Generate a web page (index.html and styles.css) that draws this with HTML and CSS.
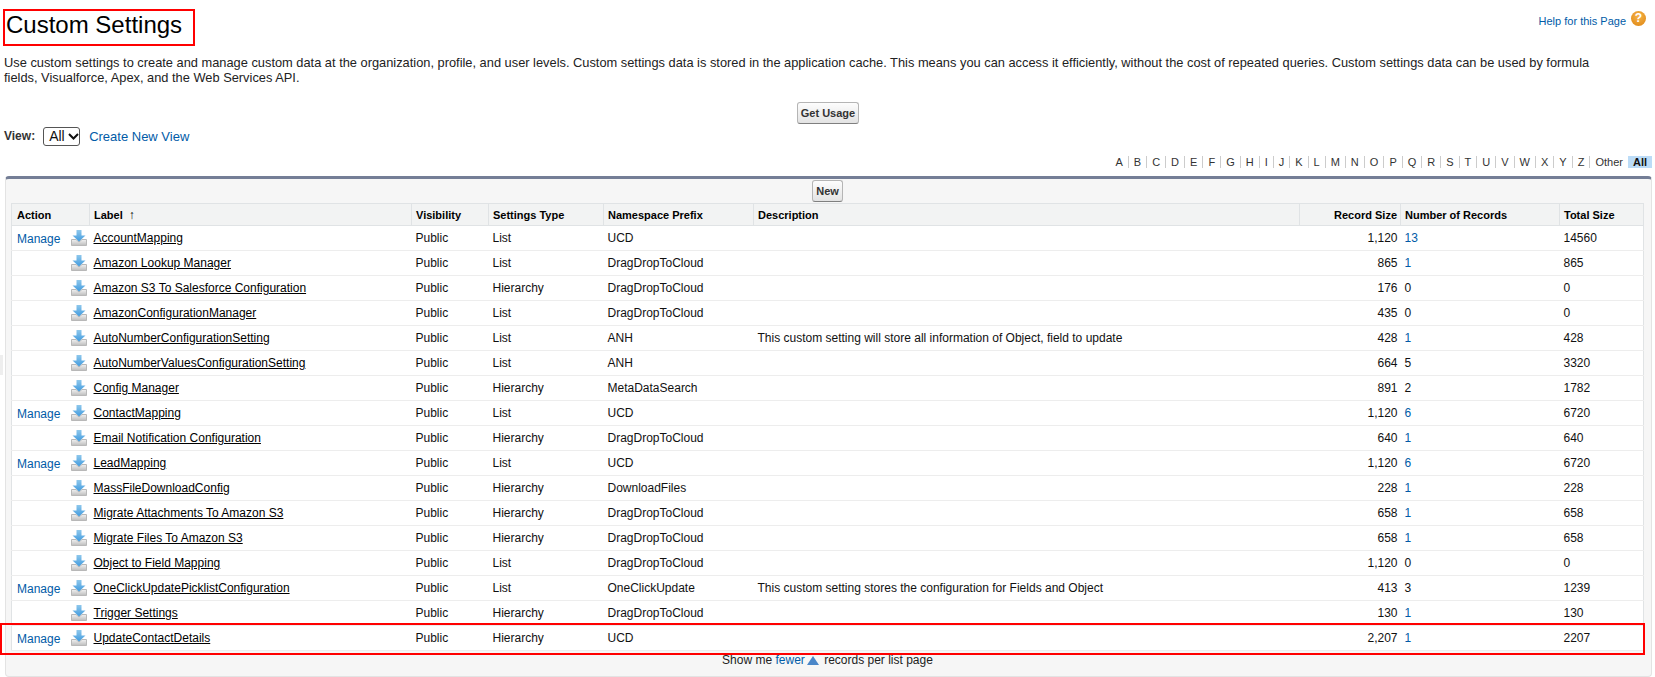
FILE: index.html
```html
<!DOCTYPE html>
<html lang="en">
<head>
<meta charset="utf-8">
<title>Custom Settings</title>
<link rel="stylesheet" href="styles.css">
</head>
<body>
<svg class="defs" width="0" height="0">
  <defs>
    <linearGradient id="tray" x1="0" y1="0" x2="0" y2="1"><stop offset="0" stop-color="#f2f2f2"/><stop offset="1" stop-color="#bcbcbc"/></linearGradient>
    <linearGradient id="arrow" x1="0" y1="0" x2="0" y2="1"><stop offset="0" stop-color="#8fc8ec"/><stop offset="1" stop-color="#3f9ade"/></linearGradient>
    <symbol id="dl" viewBox="0 0 16 16">
      <path d="M0.500 9.500h4.500l3 2.500 3-2.500h4.500v6h-15z" fill="url(#tray)" stroke="#b8b8b8"/>
      <path d="M5.500 0h5v5.500h4l-6.500 6-6.500-6h4z" fill="url(#arrow)"/>
    </symbol>
  </defs>
</svg>
<header class="top">
  <h1 class="title">Custom Settings</h1>
  <a class="help"><span class="help-text">Help for this Page</span><span class="help-icon">?</span></a>
</header>
<p class="intro">Use custom settings to create and manage custom data at the organization, profile, and user levels. Custom settings data is stored in the application cache. This means you can access it efficiently, without the cost of repeated queries. Custom settings data can be used by formula fields, Visualforce, Apex, and the Web Services API.</p>
<div class="usage"><button class="btn">Get Usage</button></div>
<div class="view">
  <b>View:</b>
  <span class="select">All<svg width="11" height="7" viewBox="0 0 11 7"><path d="M1 1l4.500 4.500L10 1" fill="none" stroke="#111" stroke-width="2"/></svg></span>
  <a class="link">Create New View</a>
</div>
<nav class="alpha">
  <a>A</a><a>B</a><a>C</a><a>D</a><a>E</a><a>F</a><a>G</a><a>H</a><a>I</a><a>J</a><a>K</a><a>L</a><a>M</a><a>N</a><a>O</a><a>P</a><a>Q</a><a>R</a><a>S</a><a>T</a><a>U</a><a>V</a><a>W</a><a>X</a><a>Y</a><a>Z</a><a>Other</a><a class="on">All</a>
</nav>
<section class="panel">
  <div class="panel-btn"><button class="btn">New</button></div>
  <table>
    <colgroup>
      <col class="c-action"><col class="c-label"><col class="c-vis"><col class="c-type"><col class="c-ns"><col class="c-desc"><col class="c-size"><col class="c-num"><col class="c-total">
    </colgroup>
    <thead>
      <tr><th>Action</th><th>Label <span class="sort">↑</span></th><th>Visibility</th><th>Settings Type</th><th>Namespace Prefix</th><th>Description</th><th class="num">Record Size</th><th>Number of Records</th><th>Total Size</th></tr>
    </thead>
    <tbody>
      <tr><td><div class="act"><a class="link">Manage</a><svg class="ico"><use href="#dl"/></svg></div></td><td><a class="lbl">AccountMapping</a></td><td>Public</td><td>List</td><td>UCD</td><td></td><td class="num">1,120</td><td class="blue">13</td><td>14560</td></tr>
      <tr><td><div class="act"><svg class="ico"><use href="#dl"/></svg></div></td><td><a class="lbl">Amazon Lookup Manager</a></td><td>Public</td><td>List</td><td>DragDropToCloud</td><td></td><td class="num">865</td><td class="blue">1</td><td>865</td></tr>
      <tr><td><div class="act"><svg class="ico"><use href="#dl"/></svg></div></td><td><a class="lbl">Amazon S3 To Salesforce Configuration</a></td><td>Public</td><td>Hierarchy</td><td>DragDropToCloud</td><td></td><td class="num">176</td><td>0</td><td>0</td></tr>
      <tr><td><div class="act"><svg class="ico"><use href="#dl"/></svg></div></td><td><a class="lbl">AmazonConfigurationManager</a></td><td>Public</td><td>List</td><td>DragDropToCloud</td><td></td><td class="num">435</td><td>0</td><td>0</td></tr>
      <tr><td><div class="act"><svg class="ico"><use href="#dl"/></svg></div></td><td><a class="lbl">AutoNumberConfigurationSetting</a></td><td>Public</td><td>List</td><td>ANH</td><td>This custom setting will store all information of Object, field to update</td><td class="num">428</td><td class="blue">1</td><td>428</td></tr>
      <tr><td><div class="act"><svg class="ico"><use href="#dl"/></svg></div></td><td><a class="lbl">AutoNumberValuesConfigurationSetting</a></td><td>Public</td><td>List</td><td>ANH</td><td></td><td class="num">664</td><td>5</td><td>3320</td></tr>
      <tr><td><div class="act"><svg class="ico"><use href="#dl"/></svg></div></td><td><a class="lbl">Config Manager</a></td><td>Public</td><td>Hierarchy</td><td>MetaDataSearch</td><td></td><td class="num">891</td><td>2</td><td>1782</td></tr>
      <tr><td><div class="act"><a class="link">Manage</a><svg class="ico"><use href="#dl"/></svg></div></td><td><a class="lbl">ContactMapping</a></td><td>Public</td><td>List</td><td>UCD</td><td></td><td class="num">1,120</td><td class="blue">6</td><td>6720</td></tr>
      <tr><td><div class="act"><svg class="ico"><use href="#dl"/></svg></div></td><td><a class="lbl">Email Notification Configuration</a></td><td>Public</td><td>Hierarchy</td><td>DragDropToCloud</td><td></td><td class="num">640</td><td class="blue">1</td><td>640</td></tr>
      <tr><td><div class="act"><a class="link">Manage</a><svg class="ico"><use href="#dl"/></svg></div></td><td><a class="lbl">LeadMapping</a></td><td>Public</td><td>List</td><td>UCD</td><td></td><td class="num">1,120</td><td class="blue">6</td><td>6720</td></tr>
      <tr><td><div class="act"><svg class="ico"><use href="#dl"/></svg></div></td><td><a class="lbl">MassFileDownloadConfig</a></td><td>Public</td><td>Hierarchy</td><td>DownloadFiles</td><td></td><td class="num">228</td><td class="blue">1</td><td>228</td></tr>
      <tr><td><div class="act"><svg class="ico"><use href="#dl"/></svg></div></td><td><a class="lbl">Migrate Attachments To Amazon S3</a></td><td>Public</td><td>Hierarchy</td><td>DragDropToCloud</td><td></td><td class="num">658</td><td class="blue">1</td><td>658</td></tr>
      <tr><td><div class="act"><svg class="ico"><use href="#dl"/></svg></div></td><td><a class="lbl">Migrate Files To Amazon S3</a></td><td>Public</td><td>Hierarchy</td><td>DragDropToCloud</td><td></td><td class="num">658</td><td class="blue">1</td><td>658</td></tr>
      <tr><td><div class="act"><svg class="ico"><use href="#dl"/></svg></div></td><td><a class="lbl">Object to Field Mapping</a></td><td>Public</td><td>List</td><td>DragDropToCloud</td><td></td><td class="num">1,120</td><td>0</td><td>0</td></tr>
      <tr><td><div class="act"><a class="link">Manage</a><svg class="ico"><use href="#dl"/></svg></div></td><td><a class="lbl">OneClickUpdatePicklistConfiguration</a></td><td>Public</td><td>List</td><td>OneClickUpdate</td><td>This custom setting stores the configuration for Fields and Object</td><td class="num">413</td><td>3</td><td>1239</td></tr>
      <tr><td><div class="act"><svg class="ico"><use href="#dl"/></svg></div></td><td><a class="lbl">Trigger Settings</a></td><td>Public</td><td>Hierarchy</td><td>DragDropToCloud</td><td></td><td class="num">130</td><td class="blue">1</td><td>130</td></tr>
      <tr><td><div class="act"><a class="link">Manage</a><svg class="ico"><use href="#dl"/></svg></div></td><td><a class="lbl">UpdateContactDetails</a></td><td>Public</td><td>Hierarchy</td><td>UCD</td><td></td><td class="num">2,207</td><td class="blue">1</td><td>2207</td></tr>
    </tbody>
  </table>
  <div class="more">Show me <a class="link">fewer</a><span class="tri"></span> records per list page</div>
</section>
<div class="handle"></div>
<div class="mark mark-title"></div>
<div class="mark mark-row"></div>
</body>
</html>
```
FILE: styles.css
```css
* { box-sizing: border-box; }
html, body { margin: 0; height: 677px; overflow: hidden; }
body { position: relative; padding: 0 3px 0 4px; background: #fff; color: #111; font-family: "Liberation Sans", Arial, sans-serif; font-size: 12px; }
.defs { position: absolute; }
.top { display: flex; justify-content: space-between; height: 50px; }
.title { margin: 11px 0 0 2px; font-size: 24px; line-height: 28px; font-weight: 400; color: #000; }
.help { margin: 11px 0 0; padding-right: 6px; color: #015ba7; font-size: 11px; display: flex; align-items: flex-start; gap: 5px; line-height: 15px; }
.help-text { margin-top: 3px; }
.help-icon { width: 15px; height: 15px; border-radius: 50%; background: radial-gradient(circle at 50% 35%, #f6b44a, #dd8410); color: #fff; font-weight: 700; font-size: 12px; line-height: 15px; text-align: center; }
.intro { margin: 5px 0 0; max-width: 1620px; font-size: 12.83px; line-height: 15px; color: #222; }
.usage { margin-top: 17px; display: flex; justify-content: center; }
.btn { height: 22px; padding: 0 3px; font: 700 11px "Liberation Sans", Arial, sans-serif; color: #333; background: linear-gradient(#fdfdfd, #e3e3e3); border: 1px solid #b5b5b5; border-bottom-color: #7f7f7f; border-radius: 3px; }
.view { display: flex; align-items: center; height: 24px; color: #333; }
.view b { font-size: 12px; margin-right: 8px; }
.select { display: inline-flex; align-items: center; gap: 3px; width: 37px; height: 19px; padding-left: 5px; font-size: 14px; color: #111; border: 1px solid #555; border-radius: 3px; margin-right: 9px; }
.link { color: #015ba7; }
.view .link { font-size: 13px; }
.alpha { display: flex; justify-content: flex-end; margin: 8px 0; height: 12px; font-size: 11px; line-height: 12px; color: #333; }
.alpha a { padding: 0 5px; border-right: 1px solid #ccc; }
.alpha a:nth-last-child(2) { border-right: 0; }
.alpha a.on { background: #bcdcf7; font-weight: 700; color: #111; border: 0; padding: 0 5px; }
.panel { margin-left: 1px; height: 501px; background: #f6f6f6; border: 1px solid #e3e3e3; border-top: 3px solid #747e96; border-radius: 4px; padding: 0 7px 0 5px; }
.panel-btn { display: flex; justify-content: center; padding-top: 1px; height: 24px; }
table { width: 100%; table-layout: fixed; border-collapse: collapse; background: #fff; border: 1px solid #e0e3e5; font-size: 12px; color: #111; }
.c-action { width: 78px; } .c-label { width: 322px; } .c-vis { width: 77px; } .c-type { width: 115px; } .c-ns { width: 150px; } .c-desc { width: 546px; } .c-size { width: 101px; } .c-num { width: 159px; } .c-total { width: auto; }
th { height: 22px; padding: 0 4px; text-align: left; font-size: 11px; font-weight: 700; background: #f2f3f3; border-bottom: 1px solid #e0e3e5; border-left: 1px solid #e0e3e5; color: #000; }
th:first-child { border-left: 0; padding-left: 5px; }
td { height: 25px; padding: 0 4px; border-bottom: 1px solid #ededed; white-space: nowrap; overflow: hidden; }
td:first-child { padding-left: 5px; }
th.num, td.num { text-align: right; padding-right: 3px; }
td.blue { color: #015ba7; }
.sort { font-size: 12px; margin-left: 3px; }
.act { position: relative; height: 24px; line-height: 26px; }
.ico { position: absolute; left: 54px; top: 4px; width: 16px; height: 16px; }
.lbl { color: #000; text-decoration: underline; }
.more { display: flex; justify-content: center; align-items: center; height: 14px; margin-top: 2px; font-size: 12px; color: #222; white-space: pre; }
.tri { width: 0; height: 0; margin: 0 2px; border-left: 6.5px solid transparent; border-right: 6.5px solid transparent; border-bottom: 9px solid #4a86c8; }
.handle { position: absolute; left: 0; top: 355px; width: 3px; height: 20px; background: #eee; }
.mark { position: absolute; border: 2px solid #f00; pointer-events: none; }
.mark-title { left: 3px; top: 9px; width: 192px; height: 37px; }
.mark-row { left: 0; top: 623px; width: 1645px; height: 32px; }
```
